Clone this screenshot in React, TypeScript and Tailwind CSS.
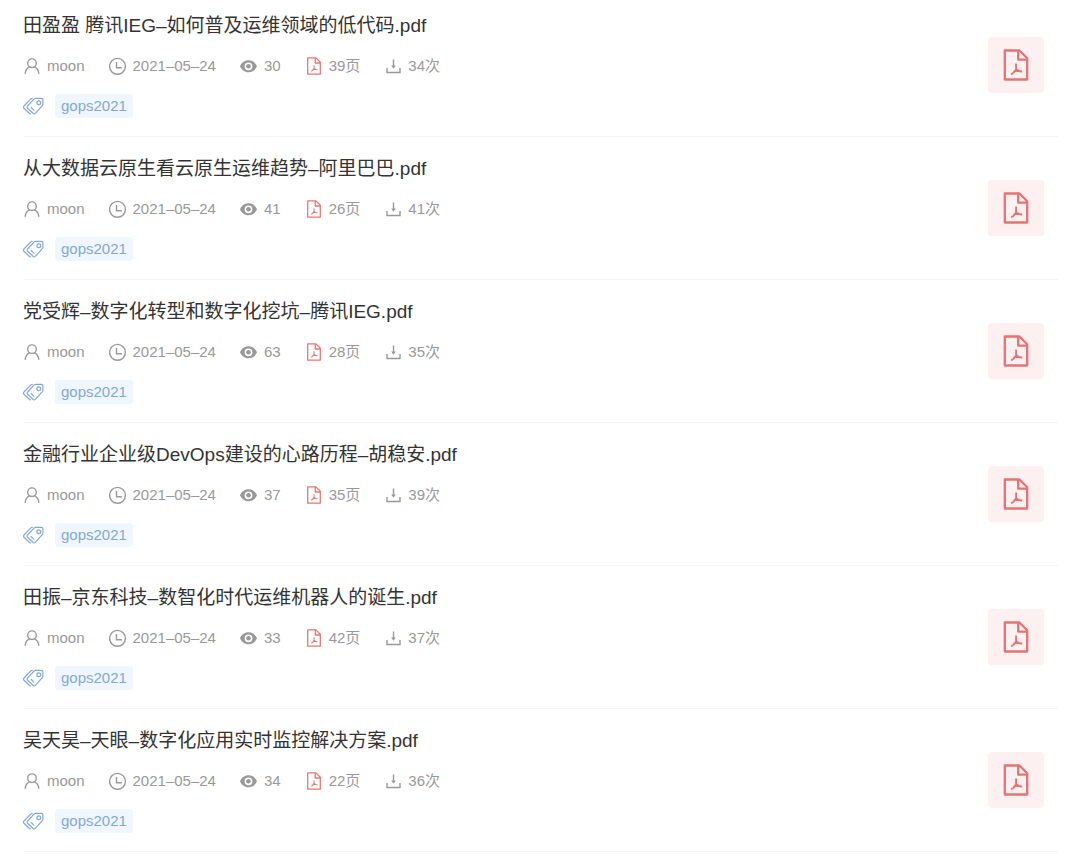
import React from 'react';

interface Doc {
  title: string;
  author: string;
  date: string;
  views: number;
  pages: number;
  downloads: number;
  tag: string;
}

const docs: Doc[] = [
  { title: '田盈盈 腾讯IEG–如何普及运维领域的低代码.pdf', author: 'moon', date: '2021–05–24', views: 30, pages: 39, downloads: 34, tag: 'gops2021' },
  { title: '从大数据云原生看云原生运维趋势–阿里巴巴.pdf', author: 'moon', date: '2021–05–24', views: 41, pages: 26, downloads: 41, tag: 'gops2021' },
  { title: '党受辉–数字化转型和数字化挖坑–腾讯IEG.pdf', author: 'moon', date: '2021–05–24', views: 63, pages: 28, downloads: 35, tag: 'gops2021' },
  { title: '金融行业企业级DevOps建设的心路历程–胡稳安.pdf', author: 'moon', date: '2021–05–24', views: 37, pages: 35, downloads: 39, tag: 'gops2021' },
  { title: '田振–京东科技–数智化时代运维机器人的诞生.pdf', author: 'moon', date: '2021–05–24', views: 33, pages: 42, downloads: 37, tag: 'gops2021' },
  { title: '吴天昊–天眼–数字化应用实时监控解决方案.pdf', author: 'moon', date: '2021–05–24', views: 34, pages: 22, downloads: 36, tag: 'gops2021' },
];

function UserIcon() {
  return (
    <svg className="size-[18px] shrink-0" viewBox="0 0 18 18" fill="none" stroke="currentColor" strokeWidth={1.4} strokeLinecap="round" aria-hidden="true">
      <circle cx="9" cy="6.2" r="4.3" />
      <path d="M2.2 16.2c.3-3 1.700-5.200 4.200-6.400M15.800 16.200c-.3-3-1.700-5.200-4.200-6.400" />
    </svg>
  );
}

function ClockIcon() {
  return (
    <svg className="size-[18px] shrink-0" viewBox="0 0 18 18" fill="none" stroke="currentColor" strokeWidth={1.4} aria-hidden="true">
      <circle cx="8.500" cy="9.300" r="7.900" />
      <path d="M7.500 5v5.800h5.400" />
    </svg>
  );
}

function EyeIcon() {
  return (
    <svg className="size-[18px] shrink-0" viewBox="0 0 18 18" fill="currentColor" aria-hidden="true">
      <path fillRule="evenodd" d="M8.500 3.300C4.500 3.300 1.500 5.700 0 9.300c1.500 3.600 4.500 6 8.500 6s7-2.400 8.500-6c-1.500-3.600-4.500-6-8.500-6Zm0 2.100a3.900 3.900 0 1 1 0 7.800 3.900 3.900 0 0 1 0-7.800Z" />
      <circle cx="8.500" cy="9.300" r="2.300" />
    </svg>
  );
}

function DownloadIcon() {
  return (
    <svg className="size-[18px] shrink-0" viewBox="0 0 18 18" fill="none" stroke="currentColor" strokeWidth={1.4} aria-hidden="true">
      <path d="M9.500 2.500v7" />
      <path d="M7.200 8.600h4.600L9.500 11.800Z" fill="currentColor" stroke="none" />
      <path d="M3 11v4.500h13V11" />
    </svg>
  );
}

function PdfIcon({ className }: { className: string }) {
  return (
    <svg className={className} viewBox="0 0 32 32" fill="none" stroke="currentColor" strokeWidth={2.3} strokeLinejoin="round" aria-hidden="true">
      <path d="M4.800 1.500h14.600l7.800 7.800v21.200H4.800Z" />
      <path d="M18.200 1.500v9.200h9" />
      <path d="M16.100 14.500v6M16.100 20c-.9 2.500-2.600 4.200-5 5.300M16.100 20c1.300 2 3.200 2.700 6.100 2.500M13.400 22.900c2-1 3.800-1.300 5.800-1.100" strokeWidth={1.900} />
    </svg>
  );
}

function TagsIcon() {
  return (
    <svg className="h-5 w-[22px] shrink-0 text-[#82a9d6]" viewBox="0 0 22 20" fill="none" stroke="currentColor" strokeWidth={1.2} strokeLinecap="round" strokeLinejoin="round" aria-hidden="true">
      <path d="M12.600 2.300h5.600a1.700 1.700 0 0 1 1.700 1.700v4.200c0 .6-.2 1-.6 1.500l-7 7.600a1.600 1.600 0 0 1-2.300 0l-5.400-5a1.600 1.600 0 0 1 0-2.300l6.600-7.100c.4-.4.800-.6 1.400-.6Z" />
      <circle cx="15.800" cy="6.700" r="1.900" />
      <path d="M9.300 2.300c-.6 0-1 .2-1.400.6L1 10a1.600 1.600 0 0 0 0 2.300l5.300 5c.4.400.800.5 1.200.5" />
      <path d="m8.200 11.500 2.700 2.600" />
    </svg>
  );
}

function DocRow({ doc }: { doc: Doc }) {
  return (
    <li className="flex items-center justify-between border-b border-[#f5f5f5] py-[18px] first:pt-3">
      <div className="min-w-0">
        <h2 className="text-[19px] leading-7 text-[#333]">
          <a href="#">{doc.title}</a>
        </h2>

        {/* Meta info */}
        <div className="mt-3.5 flex flex-wrap items-center gap-x-6 text-[15px] leading-6 text-[#999]">
          <span className="flex items-center gap-1.5">
            <UserIcon />
            {doc.author}
          </span>
          <span className="flex items-center gap-1.5">
            <ClockIcon />
            {doc.date}
          </span>
          <span className="flex items-center gap-1.5">
            <EyeIcon />
            {doc.views}
          </span>
          <span className="flex items-center gap-1.5">
            <PdfIcon className="size-[18px] shrink-0 text-[#ec7673]" />
            {`${doc.pages}页`}
          </span>
          <span className="flex items-center gap-1.5">
            <DownloadIcon />
            {`${doc.downloads}次`}
          </span>
        </div>

        {/* Tags */}
        <div className="mt-4 flex items-center gap-2.5">
          <TagsIcon />
          <a href="#" className="rounded bg-[#eff6ff] px-1.5 text-[15px] leading-6 text-[#82a9d6]">
            {doc.tag}
          </a>
        </div>
      </div>

      <div className="mr-3.5 flex size-14 shrink-0 items-center justify-center rounded bg-[#fdf0f0]">
        <PdfIcon className="size-8 text-[#e57373]" />
      </div>
    </li>
  );
}

export default function App() {
  return (
    <main className="bg-white font-['Liberation_Sans','Noto_Sans_CJK_SC',sans-serif]">
      <ul className="pr-[22px] pl-[23px]">
        {docs.map((doc) => (
          <DocRow key={doc.title} doc={doc} />
        ))}
      </ul>
    </main>
  );
}
